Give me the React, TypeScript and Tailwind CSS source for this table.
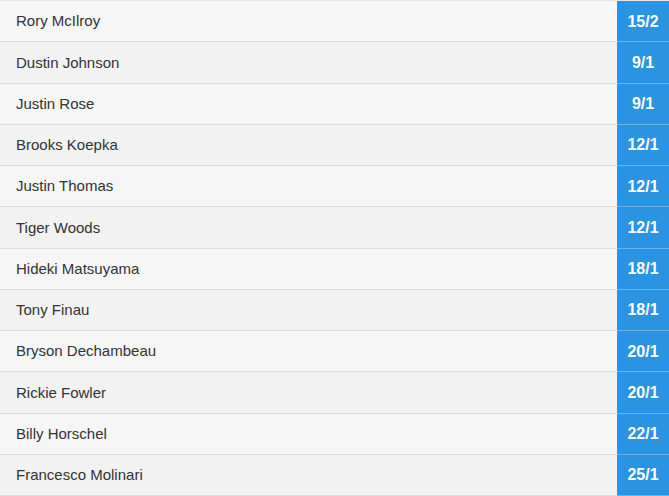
const odds: [string, string][] = [
  ["Rory McIlroy", "15/2"],
  ["Dustin Johnson", "9/1"],
  ["Justin Rose", "9/1"],
  ["Brooks Koepka", "12/1"],
  ["Justin Thomas", "12/1"],
  ["Tiger Woods", "12/1"],
  ["Hideki Matsuyama", "18/1"],
  ["Tony Finau", "18/1"],
  ["Bryson Dechambeau", "20/1"],
  ["Rickie Fowler", "20/1"],
  ["Billy Horschel", "22/1"],
  ["Francesco Molinari", "25/1"],
];

export default function App() {
  return (
    <div className="h-[496px] w-[669px] flex flex-col font-['Liberation_Sans',Arial,sans-serif] border-t border-[#e6e6e6]">
      {odds.map(([name, price], i) => (
        <div
          key={name}
          className={`flex-1 flex items-stretch ${i % 2 === 0 ? "bg-[#f6f6f6]" : "bg-[#f2f2f2]"}`}
        >
          <div className="flex-1 flex items-center pl-4 pt-px text-[15px] text-[#333] border-b border-[#dcdcdc]">
            {name}
          </div>
          <div className="w-[52px] flex items-center justify-center pt-px bg-[#2a93e2] text-white font-bold text-[16px] border-b border-[#6db5ec]">
            {price}
          </div>
        </div>
      ))}
    </div>
  );
}
